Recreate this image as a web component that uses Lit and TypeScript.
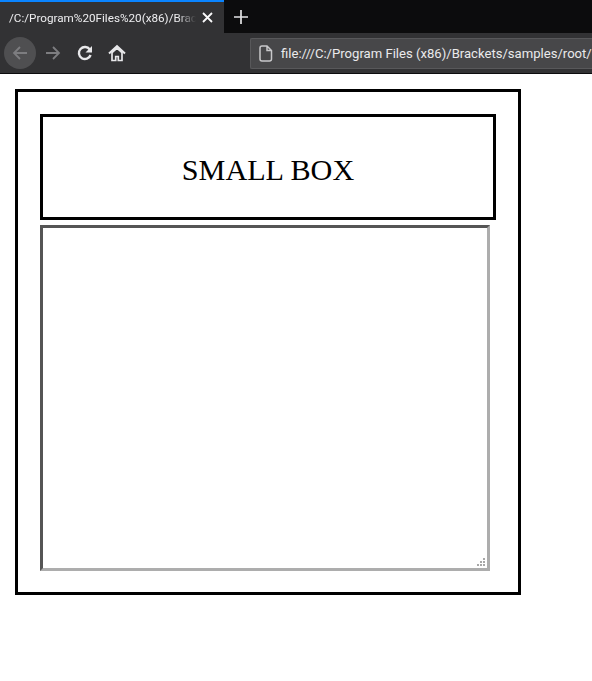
import { LitElement, html, css } from "lit";
import { customElement } from "lit/decorators.js";

@customElement("app-root")
export class AppRoot extends LitElement {
  static styles = css`
    :host { display: block; height: 681px; background: #fff; overflow: hidden; font-family: "Liberation Serif", serif; }
    .chrome { box-sizing: border-box; background: #323234; border-bottom: 1px solid #0c0c0d; height: 74px; font-family: Roboto, "Open Sans", sans-serif; display: flex; flex-direction: column; color: #f9f9fa; }
    .strip { height: 33px; background: #0c0c0d; display: flex; flex: none; }
    .tab { width: 224px; box-sizing: border-box; background: #323234; border-top: 2px solid #0a84ff; display: flex; align-items: center; padding: 0 11px 0 9px; gap: 6px; }
    .title { flex: 1; min-width: 0; font-size: 11.7px; white-space: nowrap; overflow: hidden; color: #eeeef0; -webkit-mask-image: linear-gradient(to right, #000 90%, transparent); mask-image: linear-gradient(to right, #000 90%, transparent); }
    .newtab { width: 34px; display: flex; align-items: center; justify-content: center; }
    .bar { flex: 1; display: flex; align-items: center; padding: 0 0 0 4px; }
    .btn { width: 32px; height: 32px; display: flex; align-items: center; justify-content: center; flex: none; }
    .btn.back { border-radius: 50%; background: #4f4f51; margin-right: 1px; }
    .url { margin-left: 117px; flex: 1; min-width: 0; height: 31px; box-sizing: border-box; background: #474749; border: 1px solid #58585a; border-right: none; border-radius: 2px 0 0 2px; display: flex; align-items: center; gap: 8px; padding-left: 7px; overflow: hidden; }
    .urltext { font-size: 13.1px; white-space: nowrap; color: #eaeaec; }
    svg { display: block; }
    .outer { box-sizing: border-box; width: 506px; height: 506px; margin: 15px 0 0 15px; border: 3px solid #000; padding: 22px; display: flex; flex-direction: column; gap: 5px; align-items: flex-start; }
    .small { box-sizing: border-box; width: 456px; height: 106px; border: 3px solid #000; padding-top: 6px; display: flex; align-items: center; justify-content: center; font-size: 30.2px; color: #000; flex: none; }
    .wrap { position: relative; width: 450px; height: 346px; flex: none; }
    .area { box-sizing: border-box; width: 100%; height: 100%; margin: 0; padding: 0; border: 3px solid; border-color: #555 #adadad #adadad #555; background: #fff; outline: none; resize: none; display: block; }
    .grip { position: absolute; right: 5px; bottom: 5px; }
  `;

  render() {
    return html`
      <div class="chrome">
        <div class="strip">
          <div class="tab">
            <span class="title">/C:/Program%20Files%20(x86)/Brac</span>
            <svg width="11" height="11" viewBox="0 0 11 11"><path d="M1 1l9 9M10 1l-9 9" stroke="#f9f9fa" stroke-width="1.8" fill="none"/></svg>
          </div>
          <div class="newtab">
            <svg width="14" height="14" viewBox="0 0 14 14"><path d="M7 0v14M0 7h14" stroke="#e4e4e6" stroke-width="1.7" fill="none"/></svg>
          </div>
        </div>
        <div class="bar">
          <div class="btn back">
            <svg width="18" height="18" viewBox="0 0 18 18"><path d="M16 9H3M9 3L3 9l6 6" stroke="#7d7d80" stroke-width="1.8" fill="none"/></svg>
          </div>
          <div class="btn">
            <svg width="18" height="18" viewBox="0 0 18 18"><path d="M2 9h13M9 3l6 6-6 6" stroke="#7d7d80" stroke-width="1.8" fill="none"/></svg>
          </div>
          <div class="btn">
            <svg width="18" height="18" viewBox="0 0 18 18"><path d="M14.600 11a6 6 0 1 1-.8-5.500" stroke="#e8e8ea" stroke-width="2.400" fill="none"/><path d="M16 2v6.500h-6.500z" fill="#e8e8ea"/></svg>
          </div>
          <div class="btn">
            <svg width="18" height="18" viewBox="0 0 18 18"><path d="M1 9.500L9 2.200l8 7.300" stroke="#e8e8ea" stroke-width="2" fill="none"/><path d="M4 8.500V16.500h3.700v-4h2.600v4H14V8.500L9 4z" fill="none" stroke="#e8e8ea" stroke-width="1.700"/></svg>
          </div>
          <div class="url">
            <svg width="15" height="17" viewBox="0 0 15 17" style="flex:none"><path d="M2 3a2 2 0 0 1 2-2h5l4.500 4.500V14a2 2 0 0 1-2 2H4a2 2 0 0 1-2-2zM9 1v4.500h4.500" stroke="#c8c8ca" stroke-width="1.500" fill="none"/></svg>
            <span class="urltext">file:///C:/Program Files (x86)/Brackets/samples/root/</span>
          </div>
        </div>
      </div>
      <div class="outer">
        <div class="small">SMALL BOX</div>
        <div class="wrap">
          <textarea class="area"></textarea>
          <svg class="grip" width="8" height="8" viewBox="0 0 8 8" fill="#a8a8a8"><rect x="6" y="0" width="2" height="2"/><rect x="3" y="3" width="2" height="2"/><rect x="6" y="3" width="2" height="2"/><rect x="0" y="6" width="2" height="2"/><rect x="3" y="6" width="2" height="2"/><rect x="6" y="6" width="2" height="2"/></svg>
        </div>
      </div>
    `;
  }
}
